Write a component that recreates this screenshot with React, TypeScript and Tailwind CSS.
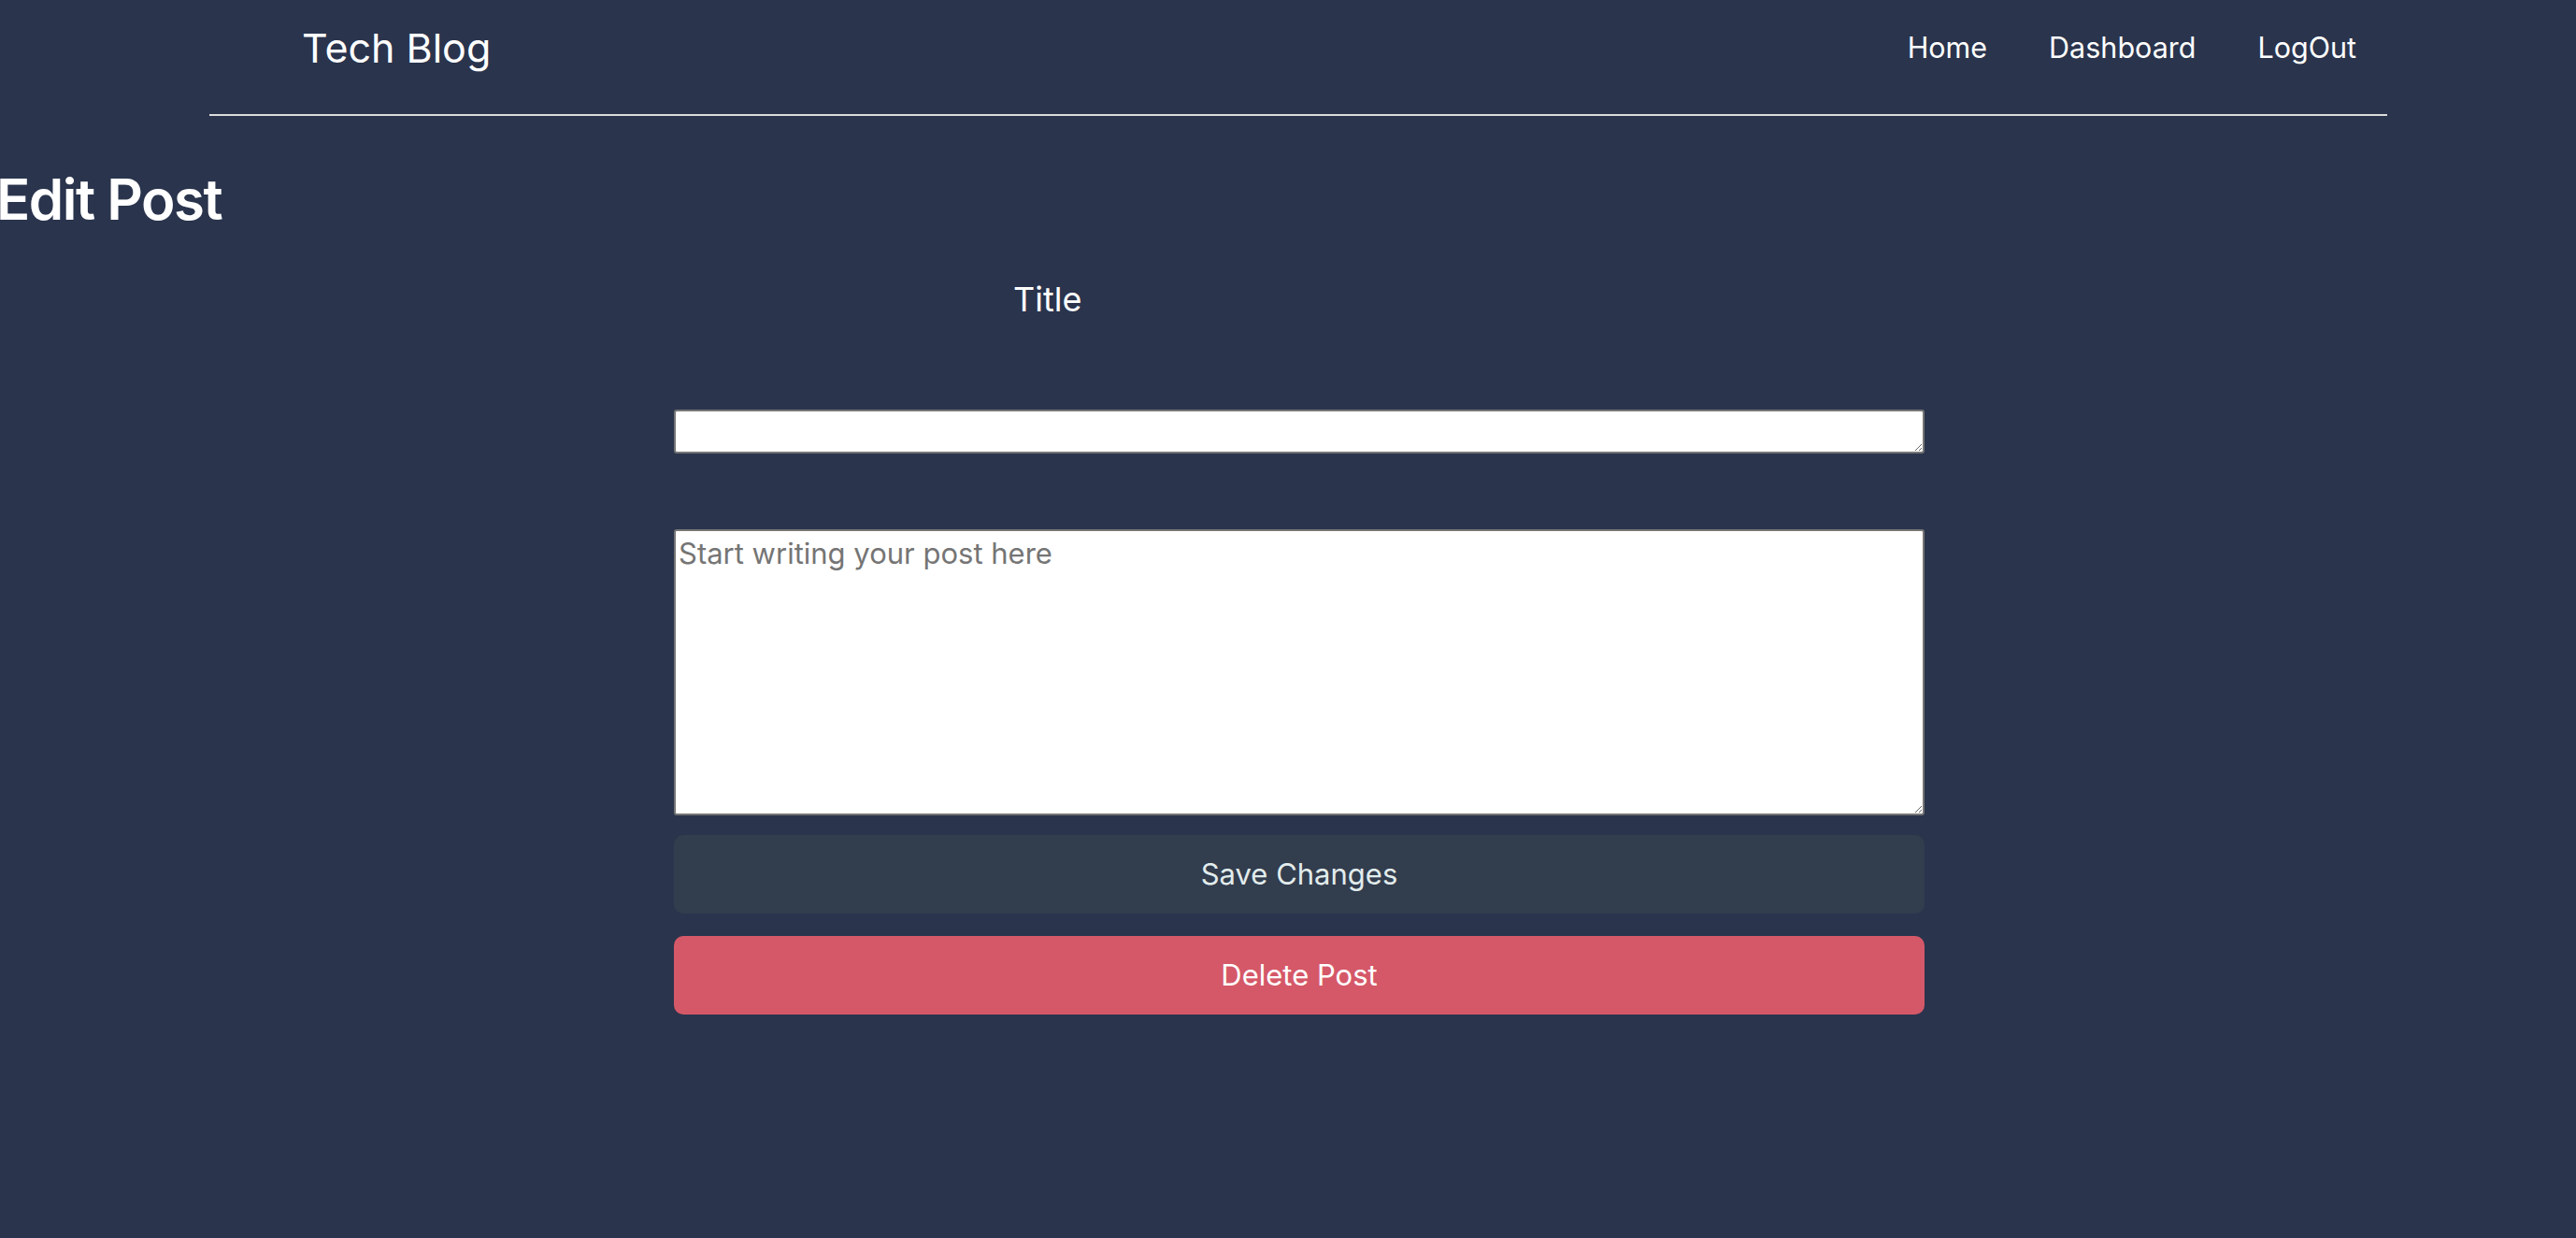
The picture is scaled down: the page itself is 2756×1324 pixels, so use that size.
import React from 'react';

// Edit post page of the tech blog
export default function App() {
  const navLinks = ['Home', 'Dashboard', 'LogOut'];

  return (
    <div className="min-h-screen w-full bg-[#2a344d] text-white font-['Inter',sans-serif]">
      {/* Header with bottom rule */}
      <header className="ml-[224px] w-[2330px] h-[124px] pb-[20px] pl-[99px] pr-[33px] flex items-center justify-between border-b-2 border-[#dcdcdc]">
        <a href="#" className="text-[43px] leading-none">Tech Blog</a>
        <nav className="flex items-center gap-[66px]">
          {navLinks.map((link) => (
            <a key={link} href="#" className="text-[30.5px] leading-none">
              {link}
            </a>
          ))}
        </nav>
      </header>

      <h1 className="mt-[59px] -ml-[4px] text-[60px] leading-none font-semibold tracking-tight">Edit Post</h1>

      {/* Form */}
      <form className="ml-[721px] w-[1338px] flex flex-col">
        <label className="mt-[59px] pl-[363px] text-[36px] leading-none">Title</label>
        <textarea
          className="mt-[100px] h-[47px] bg-white border-2 border-[#767676] rounded-[3px] px-[3px] py-[2px] text-[31px] text-black"
        />
        <textarea
          placeholder="Start writing your post here"
          className="mt-[81px] h-[306px] bg-white border-2 border-[#767676] rounded-[3px] px-[3px] py-[1px] text-[31px] text-black placeholder:text-[#757575]"
        />
        <button
          type="button"
          className="mt-[21px] h-[84px] rounded-[10px] bg-[#323d4e] text-[31px] text-[#e2ecec]"
        >
          Save Changes
        </button>
        <button
          type="button"
          className="mt-[24px] h-[84px] rounded-[10px] bg-[#d55868] text-[31px] text-white"
        >
          Delete Post
        </button>
      </form>
    </div>
  );
}
